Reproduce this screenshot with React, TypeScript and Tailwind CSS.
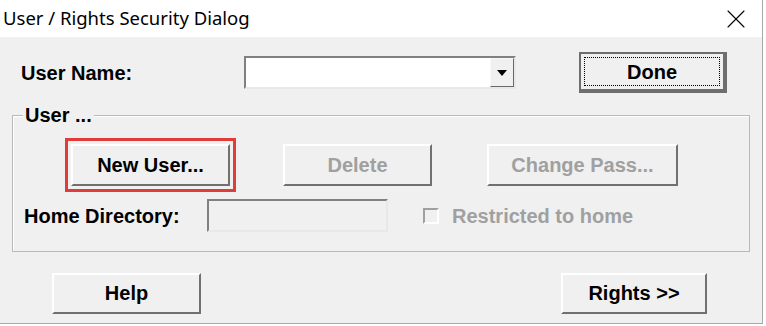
import { X } from "lucide-react";

export default function App() {
  return (
    <div className="w-[766px] h-[326px] bg-white overflow-hidden font-['Liberation_Sans',Arial,sans-serif]">
      <div className="w-[763px] h-[324px] border-r border-b border-[#a8a8a8] flex flex-col">
        {/* TITLE BAR */}
        <div className="h-[37px] shrink-0 bg-white flex items-center justify-between pl-[3px] pr-[10px]">
          <span className="font-['Noto_Sans',sans-serif] text-[18.5px] text-black leading-none">
            User / Rights Security Dialog
          </span>
          <X size={32} strokeWidth={0.8} className="text-black" />
        </div>

        {/* BODY */}
        <div className="flex-1 bg-[#f0f0f0] flex flex-col text-[20px] font-bold text-black leading-none">
          {/* user name row */}
          <div className="mt-[15px] h-[41px] flex items-center">
            <div className="w-[244px] pl-[21px]">User Name:</div>
            <div className="w-[272px] h-[33px] bg-white border-2 border-t-[#808080] border-l-[#808080] border-r-[#e8e8e8] border-b-[#e8e8e8] flex justify-end">
              <div className="w-[24px] h-full bg-[#f0f0f0] border border-t-[#f8f8f8] border-l-[#f8f8f8] border-r-[#696969] border-b-[#696969] flex items-center justify-center">
                <svg width="10" height="6" viewBox="0 0 10 6">
                  <path d="M0 0h10L5 6z" fill="#000" />
                </svg>
              </div>
            </div>
            <div className="ml-[63px] w-[148px] h-[41px] bg-[#f0f0f0] border-2 border-[#6e6e6e] border-r-4 border-b-4 p-[3px] flex">
              <div className="flex-1 border border-dotted border-black flex items-center justify-center">
                Done
              </div>
            </div>
          </div>

          {/* group box */}
          <div className="mt-[22px] ml-[12px] w-[738px] h-[137px] border border-[#b9b9b9] shadow-[inset_1px_1px_0_#ffffff] relative flex flex-col">
            <span className="absolute -top-[11px] left-[10px] px-[2px] bg-[#f0f0f0]">User ...</span>

            <div className="mt-[22px] flex items-start">
              <div className="ml-[52px] border-[3px] border-[#e03c3c] p-[3px]">
                <div className="w-[159px] h-[42px] bg-[#f0f0f0] border-2 border-t-white border-l-white border-r-[#707070] border-b-[#707070] flex items-center justify-center">
                  New User...
                </div>
              </div>
              <div className="mt-[6px] ml-[47px] w-[149px] h-[42px] bg-[#f0f0f0] border-2 border-t-white border-l-white border-r-[#707070] border-b-[#707070] flex items-center justify-center text-[#a0a0a0]">
                Delete
              </div>
              <div className="mt-[6px] ml-[55px] w-[191px] h-[42px] bg-[#f0f0f0] border-2 border-t-white border-l-white border-r-[#707070] border-b-[#707070] flex items-center justify-center text-[#a0a0a0]">
                Change Pass...
              </div>
            </div>

            <div className="mt-[7px] h-[33px] flex items-center">
              <div className="w-[194px] pl-[11px]">Home Directory:</div>
              <div className="w-[181px] h-[33px] border-2 border-t-[#808080] border-l-[#808080] border-r-[#e8e8e8] border-b-[#e8e8e8]" />
              <div className="ml-[35px] w-[16px] h-[16px] border-2 border-t-[#a0a0a0] border-l-[#a0a0a0] border-r-white border-b-white" />
              <span className="ml-[13px] text-[#a0a0a0]">Restricted to home</span>
            </div>
          </div>

          {/* bottom buttons */}
          <div className="mt-[21px] flex">
            <div className="ml-[52px] w-[149px] h-[41px] pb-[2px] bg-[#f0f0f0] border-2 border-t-white border-l-white border-r-[#707070] border-b-[#707070] flex items-center justify-center">
              Help
            </div>
            <div className="ml-[360px] w-[146px] h-[41px] pb-[2px] bg-[#f0f0f0] border-2 border-t-white border-l-white border-r-[#707070] border-b-[#707070] flex items-center justify-center">
              Rights &gt;&gt;
            </div>
          </div>
        </div>
      </div>
    </div>
  );
}
